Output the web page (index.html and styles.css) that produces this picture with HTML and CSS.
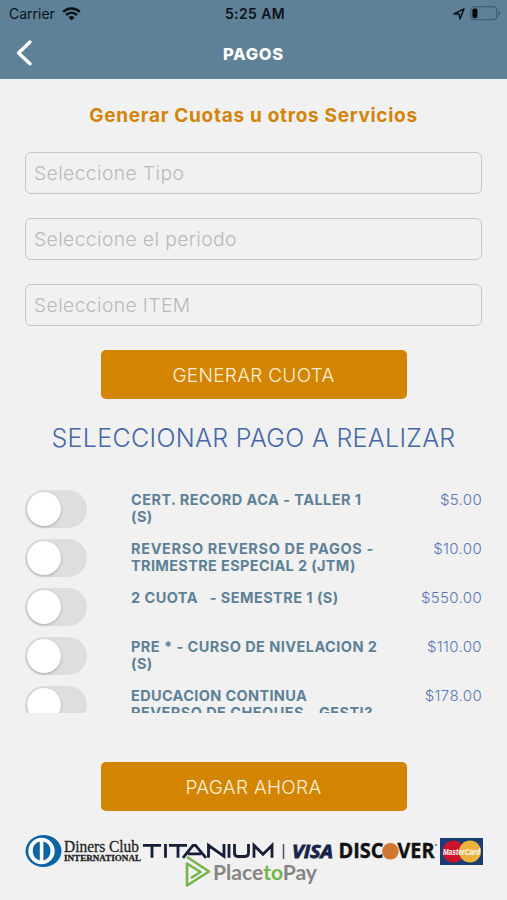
FILE: index.html
```html
<!DOCTYPE html>
<html lang="es">
<head>
<meta charset="utf-8">
<title>Pagos</title>
<link rel="stylesheet" href="styles.css">
</head>
<body>
<header class="header">
  <div class="status">
    <div class="carrier"><span>Carrier</span>
      <svg width="19" height="14" viewBox="0 0 19 14" fill="none" stroke="#0b1318" stroke-width="2.5"><path d="M1.2 4.8a12 12 0 0 1 16.6 0M4.1 8a7.8 7.8 0 0 1 10.8 0"/><path d="M9.5 13.6 6.4 10.4a4.5 4.5 0 0 1 6.2 0z" fill="#0b1318" stroke="none"/></svg>
    </div>
    <time class="clock">5:25 AM</time>
    <div class="indicators">
      <svg width="12" height="12" viewBox="0 0 12 12" fill="none" stroke="#0b1318" stroke-width="1.5" stroke-linejoin="round"><path d="M.9 5.9 11 1 6.9 11 6.1 6z"/></svg>
      <svg width="31" height="15" viewBox="0 0 31 15"><rect x=".8" y=".8" width="26" height="13" rx="3.5" fill="none" stroke="#3d5665" stroke-width="1.1"/><rect x="2.4" y="2.6" width="5" height="9.6" rx="1.6" fill="#05090c"/><path d="M28.4 5v5q1.6-.8 1.6-2.5T28.4 5z" fill="#3d5665"/></svg>
    </div>
  </div>
  <div class="nav">
    <svg class="back" width="18" height="28" viewBox="0 0 18 28" fill="none" stroke="#fff" stroke-width="3.4" stroke-linecap="round" stroke-linejoin="round"><path d="M15 3 3.500 14 15 24.800"/></svg>
    <h1 class="nav-title">PAGOS</h1>
  </div>
</header>
<main class="content">
  <h2 class="form-title">Generar Cuotas u otros Servicios</h2>
  <div class="fields">
    <div class="field">Seleccione Tipo</div>
    <div class="field">Seleccione el periodo</div>
    <div class="field">Seleccione ITEM</div>
  </div>
  <button class="button generate">GENERAR CUOTA</button>
  <h2 class="list-title">SELECCIONAR PAGO A REALIZAR</h2>
  <div class="list">
    <div class="row"><span class="toggle"></span><p class="name">CERT. RECORD ACA - TALLER 1<br>(S)</p><span class="price">$5.00</span></div>
    <div class="row"><span class="toggle"></span><p class="name wide">REVERSO REVERSO DE PAGOS -<br><span class="snug">TRIMESTRE ESPECIAL 2 (JTM)</span></p><span class="price">$10.00</span></div>
    <div class="row"><span class="toggle"></span><p class="name">2 CUOTA &nbsp; - SEMESTRE 1 (S)</p><span class="price">$550.00</span></div>
    <div class="row"><span class="toggle"></span><p class="name">PRE * - CURSO DE NIVELACION 2<br>(S)</p><span class="price">$110.00</span></div>
    <div class="row"><span class="toggle"></span><p class="name"><span class="snug">EDUCACION CONTINUA</span><br>REVERSO DE CHEQUES - GESTI?</p><span class="price">$178.00</span></div>
  </div>
  <button class="button pay">PAGAR AHORA</button>
</main>
<footer class="brands">
  <svg width="458" height="56" viewBox="0 0 458 56">
    <ellipse cx="18.5" cy="16" rx="18" ry="16" fill="#0b65a3"/>
    <circle cx="16.500" cy="16" r="13.2" fill="#fff"/>
    <path d="M14.800 6.600v18.800a9.800 9.800 0 0 1 0-18.800zM18.400 6.600v18.800a9.800 9.800 0 0 0 0-18.800z" fill="#0b65a3"/>
    <g class="diners"><text x="39" y="17" font-size="17.5" textLength="75" lengthAdjust="spacingAndGlyphs">Diners Club</text>
    <text x="39" y="26" font-size="8.8" font-weight="bold" textLength="77" lengthAdjust="spacingAndGlyphs">INTERNATIONAL</text></g>
    <path fill="none" stroke="#171f36" stroke-width="2.8" d="M118 10.300h18M127 10v12.800M140.500 9v13.800M144 10.300h18M153 10v12.800M158 22.800l10-12.500h2.500l10.500 12.500M163 18.800h13M183.500 22.800V10.300l15.500 11V9M204 9v13.800M209.500 9v9q0 3.500 3.500 3.500h7q3.500 0 3.500-3.500V9M229 22.800V10.300l9 9 9-9v12.500"/>
    <path d="M258.500 9v15" stroke="#4c5360" stroke-width="1.5"/>
    <text class="visa" x="267" y="22.500" textLength="41" lengthAdjust="spacingAndGlyphs">VISA</text>
    <g class="discover"><text x="313.500" y="23.300" textLength="45" lengthAdjust="spacingAndGlyphs">DISC</text>
    <text x="372.500" y="23.300" textLength="37" lengthAdjust="spacingAndGlyphs">VER</text></g>
    <circle cx="365.400" cy="16.300" r="8.300" fill="#d07832"/><circle cx="411" cy="10" r=".8"/>
    <rect x="415" y="3" width="43" height="27" fill="#173d74"/>
    <circle cx="428.500" cy="16.500" r="11" fill="#cb142c"/><circle cx="445" cy="16.500" r="11" fill="#eab33b"/>
    <text class="master" x="418" y="20" textLength="37" lengthAdjust="spacingAndGlyphs">MasterCard</text>
    <path fill="none" stroke="#73b44b" stroke-width="2.600" stroke-linejoin="round" d="M162 22 184 36.500 162 50.500V28.500L175.500 37 166 43"/>
    <text class="placetopay" x="188" y="44.500" textLength="104" lengthAdjust="spacingAndGlyphs">Place<tspan fill="#73b44b">to</tspan>Pay</text>
  </svg>
</footer>
</body>
</html>
```
FILE: styles.css
```css
* { box-sizing: border-box; }
body { margin: 0; width: 507px; height: 900px; overflow: hidden; background: #f1f1f1; font-family: Inter, "Liberation Sans", sans-serif; }
h1, h2, p { margin: 0; }
.header { height: 79px; background: #5e8197; }
.status { height: 27px; padding: 0 6px 0 9px; display: grid; grid-template-columns: 1fr auto 1fr; align-items: center; color: #0b1318; font-size: 14px; }
.carrier { display: flex; align-items: center; gap: 7px; }
.clock { font-weight: 600; letter-spacing: .4px; }
.indicators { display: flex; justify-content: flex-end; align-items: center; gap: 5px; }
.nav { height: 53px; padding: 0 15px; display: grid; grid-template-columns: 1fr auto 1fr; align-items: center; }
.back { margin-top: -2px; }
.nav-title { color: #fff; font-size: 16.500px; font-weight: 800; letter-spacing: .7px; }
.content { padding: 25px 25px 0; display: flex; flex-direction: column; }
.form-title { height: 24px; line-height: 24px; text-align: center; color: #d38408; font-size: 19px; font-weight: 700; letter-spacing: .7px; white-space: nowrap; }
.fields { margin-top: 24px; display: flex; flex-direction: column; gap: 24px; }
.field { height: 42px; padding: 0 8px; border: 1.500px solid #c4c4c4; border-radius: 6px; line-height: 40px; color: #b9b9b9; font-size: 19.300px; font-weight: 300; letter-spacing: .4px; }
.button { align-self: center; width: 306px; height: 49px; padding: 2px 0 0; border: 0; border-radius: 5px; background: #d38400; color: #fff0d8; font-family: inherit; font-size: 19px; font-weight: 300; letter-spacing: .3px; }
.generate { margin-top: 24px; }
.list-title { margin-top: 24px; height: 30px; line-height: 31px; text-align: center; color: #4668a8; font-size: 25px; font-weight: 300; letter-spacing: .33px; white-space: nowrap; }
.list { margin-top: 37px; height: 223px; overflow: hidden; }
.row { height: 49px; display: grid; grid-template-columns: 106px 1fr auto; }
.toggle { width: 62px; height: 38px; padding: 2px; border-radius: 19px; background: #dededf; }
.toggle::before { content: ""; display: block; width: 34px; height: 34px; border-radius: 50%; background: #fff; box-shadow: 0 1px 3px rgba(0, 0, 0, .25); }
.name { padding-top: .5px; color: #5e8197; font-size: 14.5px; font-weight: 700; line-height: 17.500px; letter-spacing: .45px; white-space: nowrap; }
.wide { letter-spacing: .65px; }
.snug { letter-spacing: .35px; }
.price { padding-top: .5px; color: #5876b8; font-size: 15px; line-height: 18px; font-weight: 300; letter-spacing: .35px; }
.pay { margin-top: 49px; }
.brands { padding: 24px 25px 0; }
.brands svg { display: block; }
.diners { font-family: "Liberation Serif", serif; fill: #222; stroke: #222; stroke-width: .3; }
.visa { font: italic bold 18px "Open Sans", sans-serif; fill: #17244a; stroke: #17244a; stroke-width: .8; }
.discover { font: bold 21px "Open Sans", sans-serif; fill: #111; stroke: #111; stroke-width: .4; }
.master { font: italic bold 9px "Liberation Sans", sans-serif; fill: #fff; }
.placetopay { font: bold 20px Lato, sans-serif; fill: #858585; }
```
